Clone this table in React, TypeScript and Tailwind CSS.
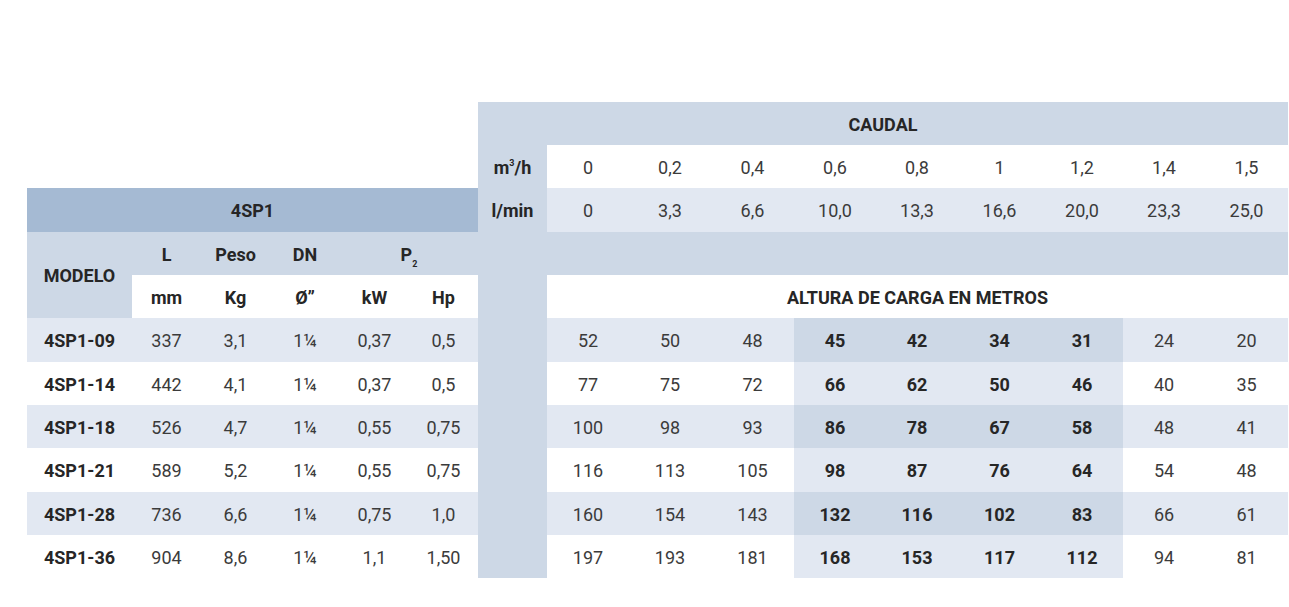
import React from "react";

// ============================================
// DATA
// ============================================

const m3h = ["0", "0,2", "0,4", "0,6", "0,8", "1", "1,2", "1,4", "1,5"];
const lmin = ["0", "3,3", "6,6", "10,0", "13,3", "16,6", "20,0", "23,3", "25,0"];

interface PumpRow {
    model: string;
    l: string;
    peso: string;
    dn: string;
    kw: string;
    hp: string;
    heads: string[];
}

const pumps: PumpRow[] = [
    { model: "4SP1-09", l: "337", peso: "3,1", dn: "1¼", kw: "0,37", hp: "0,5", heads: ["52", "50", "48", "45", "42", "34", "31", "24", "20"] },
    { model: "4SP1-14", l: "442", peso: "4,1", dn: "1¼", kw: "0,37", hp: "0,5", heads: ["77", "75", "72", "66", "62", "50", "46", "40", "35"] },
    { model: "4SP1-18", l: "526", peso: "4,7", dn: "1¼", kw: "0,55", hp: "0,75", heads: ["100", "98", "93", "86", "78", "67", "58", "48", "41"] },
    { model: "4SP1-21", l: "589", peso: "5,2", dn: "1¼", kw: "0,55", hp: "0,75", heads: ["116", "113", "105", "98", "87", "76", "64", "54", "48"] },
    { model: "4SP1-28", l: "736", peso: "6,6", dn: "1¼", kw: "0,75", hp: "1,0", heads: ["160", "154", "143", "132", "116", "102", "83", "66", "61"] },
    { model: "4SP1-36", l: "904", peso: "8,6", dn: "1¼", kw: "1,1", hp: "1,50", heads: ["197", "193", "181", "168", "153", "117", "112", "94", "81"] },
];

// data row heights, to land on the 43/44px bands of the sheet
const rowHeights = ["h-[44px]", "h-[43px]", "h-[43px]", "h-[44px]", "h-[43px]", "h-[43px]"];

const isHighlight = (i: number) => i >= 3 && i <= 6;

// ============================================
// TABLE
// ============================================

export default function App() {
    return (
        <div className="min-h-[607px] w-[1289px] bg-white pt-[102px] pl-[27px] font-['Roboto','Liberation_Sans',sans-serif] text-[18px] text-[#3b3b3b]">
            <table className="table-fixed border-collapse text-center">
                <colgroup>
                    <col className="w-[105px]" />
                    <col className="w-[69px]" />
                    <col className="w-[69px]" />
                    <col className="w-[70px]" />
                    <col className="w-[69px]" />
                    <col className="w-[69px]" />
                    <col className="w-[69px]" />
                    {m3h.map((_, i) => (
                        <col key={i} className={i % 3 === 2 ? "w-[83px]" : "w-[82px]"} />
                    ))}
                </colgroup>
                <tbody>
                    <tr className="h-[43px]">
                        <td colSpan={6} className="p-0" />
                        <td colSpan={10} className="bg-[#cdd8e6] p-0 pt-px font-bold text-[#262626]">
                            CAUDAL
                        </td>
                    </tr>
                    <tr className="h-[43px]">
                        <td colSpan={6} className="p-0" />
                        <td className="bg-[#cdd8e6] p-0 pt-px font-bold text-[#262626]">
                            m<sup className="top-[-8px] text-[9px]">3</sup>/h
                        </td>
                        {m3h.map((v, i) => (
                            <td key={i} className="bg-white p-0 pt-px">
                                {v}
                            </td>
                        ))}
                    </tr>
                    <tr className="h-[44px]">
                        <td colSpan={6} className="bg-[#a5bad3] p-0 pt-px font-bold text-[#262626]">
                            4SP1
                        </td>
                        <td className="bg-[#cdd8e6] p-0 pt-px font-bold text-[#262626]">l/min</td>
                        {lmin.map((v, i) => (
                            <td key={i} className="bg-[#e2e8f2] p-0 pt-px">
                                {v}
                            </td>
                        ))}
                    </tr>
                    <tr className="h-[43px] font-bold text-[#262626]">
                        <td rowSpan={2} className="bg-[#cdd8e6] p-0">
                            MODELO
                        </td>
                        <td className="bg-[#cdd8e6] p-0 pt-px">L</td>
                        <td className="bg-[#cdd8e6] p-0 pt-px">Peso</td>
                        <td className="bg-[#cdd8e6] p-0 pt-px">DN</td>
                        <td colSpan={2} className="bg-[#cdd8e6] p-0 pt-px">
                            P<sub className="bottom-[-6px] text-[9px]">2</sub>
                        </td>
                        <td rowSpan={8} className="bg-[#cdd8e6] p-0" />
                        <td colSpan={9} className="bg-[#cdd8e6] p-0" />
                    </tr>
                    <tr className="h-[43px] font-bold text-[#262626]">
                        <td className="bg-white p-0 pt-px">mm</td>
                        <td className="bg-white p-0 pt-px">Kg</td>
                        <td className="bg-white p-0 pt-px">Ø”</td>
                        <td className="bg-white p-0 pt-px">kW</td>
                        <td className="bg-white p-0 pt-px">Hp</td>
                        <td colSpan={9} className="bg-white p-0 pt-px">
                            ALTURA DE CARGA EN METROS
                        </td>
                    </tr>
                    {pumps.map((p, r) => {
                        const striped = r % 2 === 0;
                        const base = striped ? "bg-[#e2e8f2]" : "bg-white";
                        return (
                            <tr key={p.model} className={rowHeights[r]}>
                                <td className={`${base} p-0 pt-px font-bold text-[#262626]`}>{p.model}</td>
                                <td className={`${base} p-0 pt-px`}>{p.l}</td>
                                <td className={`${base} p-0 pt-px`}>{p.peso}</td>
                                <td className={`${base} p-0 pt-px`}>{p.dn}</td>
                                <td className={`${base} p-0 pt-px`}>{p.kw}</td>
                                <td className={`${base} p-0 pt-px`}>{p.hp}</td>
                                {p.heads.map((h, i) =>
                                    isHighlight(i) ? (
                                        <td
                                            key={i}
                                            className={`${striped ? "bg-[#cdd8e6]" : "bg-[#e2e8f2]"} p-0 pt-px font-bold text-[#262626]`}
                                        >
                                            {h}
                                        </td>
                                    ) : (
                                        <td key={i} className={`${base} p-0 pt-px`}>
                                            {h}
                                        </td>
                                    )
                                )}
                            </tr>
                        );
                    })}
                </tbody>
            </table>
        </div>
    );
}
